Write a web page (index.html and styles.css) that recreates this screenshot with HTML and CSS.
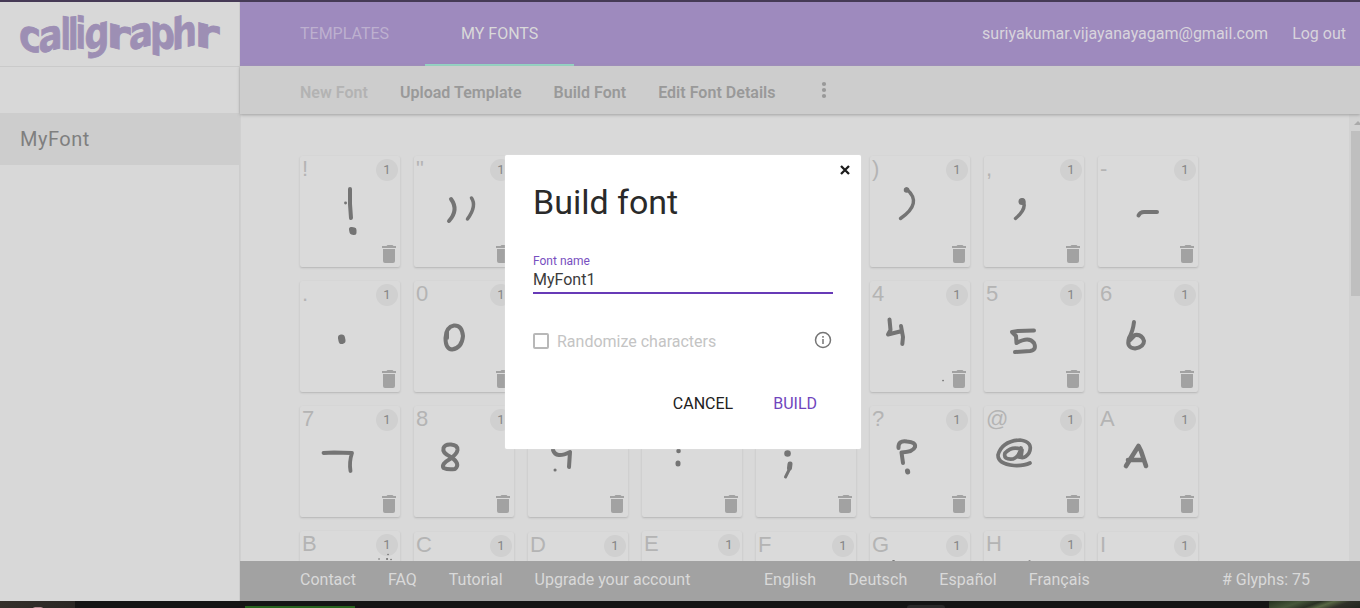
FILE: index.html
```html
<!DOCTYPE html>
<html lang="en">
<head>
<meta charset="utf-8">
<title>Calligraphr</title>
<link rel="stylesheet" href="styles.css">
</head>
<body>
<div class="app">
  <aside class="sidebar">
    <div class="brand">
      <svg class="logo" width="240" height="64" viewBox="0 2 240 64" role="img" aria-label="calligraphr">
        <g id="wordmark"></g>
      </svg>
    </div>
    <div class="spacer"></div>
    <div class="font-entry">MyFont</div>
  </aside>
  <div class="main">
    <header class="topbar">
      <a class="tab">TEMPLATES</a>
      <a class="tab tab-active">MY FONTS</a>
      <span class="account">suriyakumar.vijayanayagam@gmail.com</span>
      <span class="logout">Log out</span>
    </header>
    <nav class="toolbar">
      <span class="off">New Font</span><span>Upload Template</span><span>Build Font</span><span>Edit Font Details</span>
      <svg class="more" width="6" height="18" viewBox="0 0 6 18"><circle cx="3" cy="3" r="2.1"/><circle cx="3" cy="9" r="2.1"/><circle cx="3" cy="15" r="2.1"/></svg>
    </nav>
    <section class="content">
      <div class="grid" id="grid"></div>
      <div class="scrollbar"><i class="arrow"></i><i class="thumb"></i></div>
    </section>
    <footer class="footer">
      <span>Contact</span><span>FAQ</span><span>Tutorial</span><span class="upgrade">Upgrade your account</span>
      <span class="lang">English</span><span class="lang">Deutsch</span><span class="lang">Español</span><span class="lang">Français</span>
      <span class="count"># Glyphs: 75</span>
    </footer>
  </div>
</div>
<div class="taskbar"><i class="photo-left"></i><i class="green"></i><i class="pill"></i><i class="photo-right"></i></div>

<div class="dialog">
  <svg class="close" width="10" height="10" viewBox="0 0 10 10"><path d="M1 1 9 9M9 1 1 9"/></svg>
  <h1>Build font</h1>
  <label class="field-label">Font name</label>
  <div class="field">MyFont1</div>
  <div class="option">
    <i class="checkbox"></i><span>Randomize characters</span>
    <svg class="info" width="18" height="18" viewBox="0 0 18 18"><circle cx="9" cy="9" r="7.5"/><path d="M9 8v5M9 5v1.7"/></svg>
  </div>
  <div class="actions"><span>CANCEL</span><span class="primary">BUILD</span></div>
</div>
<script src="app.js"></script>
</body>
</html>
```
FILE: styles.css
```css
* { box-sizing: border-box; }
body {
  margin: 0; width: 1360px; height: 608px; overflow: hidden; position: relative;
  padding-top: 2px; background: #463a56;
  font-family: Roboto, "Liberation Sans", sans-serif; font-size: 16px;
}
i { display: block; }
.app { display: flex; height: 599px; }
.sidebar { width: 240px; background: #d8d8d8; border-right: 1px solid #cdcdcd; }
.brand { height: 65px; border-bottom: 1px solid #cacaca; }
.logo { display: block; }
.logo text {
  font: bold 43px "DejaVu Sans", sans-serif; fill: #9d8fb4;
  stroke: #9d8fb4; stroke-width: .9; stroke-linejoin: miter;
}
.spacer { height: 46px; }
.font-entry {
  height: 52px; width: 240px; padding-left: 20px; line-height: 52px;
  background: #cdcdcd; color: #7f7f7f; font-size: 20px; letter-spacing: .5px;
}
.main { flex: 1; display: flex; flex-direction: column; min-width: 0; }
.topbar { height: 64px; background: #9e8abe; display: flex; line-height: 64px; color: #d8d4dc; padding: 0 14px 0 24px; }
.tab { width: 161px; padding-left: 36px; color: #bdb0cf; }
.tab-active { width: 149px; color: #d9d9d9; border-bottom: 2px solid #93d6c5; }
.account { margin-left: auto; }
.logout { margin-left: 24px; }
.toolbar {
  height: 48px; background: #cdcdcd; display: flex; gap: 32px; padding-left: 60px; line-height: 53px;
  color: #999; font-weight: 600; letter-spacing: .025px; box-shadow: 0 1px 3px #a0a0a0; position: relative;
}
.toolbar .off { color: #b3b3b3; }
.more { margin: 15px 0 0 13px; fill: #999; }
.content { flex: 1; min-height: 0; overflow: hidden; background: #d9d9d9; display: flex; justify-content: space-between; border-left: 1px solid #d0d0d0; }
.grid { display: grid; grid-template-columns: repeat(8, 100px); grid-auto-rows: 111px; gap: 14px; padding: 42px 0 0 59px; align-content: start; }
.card { position: relative; background: #dadada; border-radius: 2px; box-shadow: 0 1px 2px #b5b5b5; display: flex; justify-content: space-between; padding: 3px 2px; }
.card.low { transform: translateY(1px); }
.name { font: 22px/22px "Liberation Sans", Arial, sans-serif; color: #b4b4b4; margin-top: -1px; }
.badge { width: 22px; height: 22px; border-radius: 50%; background: #d0d0d0; color: #858585; font-size: 13px; line-height: 22px; text-align: center; }
.ink { position: absolute; inset: 0; }
.ink path { fill: none; stroke: #747474; stroke-width: 4; stroke-linecap: round; stroke-linejoin: round; }
.ink .trash { fill: #a2a2a2; stroke: none; }
.scrollbar { width: 11px; background: #d2d2d2; padding: 7px 0 0 2px; overflow: hidden; }
.arrow { width: 0; height: 0; margin-left: 3px; border: 4px solid transparent; border-top: 0; border-bottom-color: #aaa; }
.thumb { height: 165px; margin-top: 6px; background: #bfbfbf; }
.footer { height: 40px; background: #a2a2a2; color: #d9d9d9; display: flex; gap: 32px; padding: 0 50px 0 60px; line-height: 37px; }
.upgrade { margin-right: 41.5px; }
.lang { letter-spacing: .08px; }
.count { margin-left: auto; }
.taskbar { height: 7px; background: #151515; display: flex; align-items: flex-end; }
.photo-left { width: 75px; height: 7px; background: radial-gradient(ellipse at 38px 7px, #b58d93 0 4px, transparent 6px), linear-gradient(90deg, #35302b, #2b2825); margin-right: 170px; }
.green { width: 110px; height: 2px; background: #28641f; margin-right: 552px; }
.pill { width: 38px; height: 3px; background: #2a2a2a; border-radius: 3px 3px 0 0; margin-right: 324px; }
.photo-right { width: 91px; height: 7px; background: linear-gradient(160deg, #25301f, #46563a 30%, #2a3024 48%, #586744 60%, #303129 75%, #22251e); }
.dialog {
  position: absolute; left: 505px; top: 155px; width: 356px; height: 294px; padding: 27px 28px 0;
  background: #fff; border-radius: 2px; box-shadow: 0 0 1px #eee; display: flex; flex-direction: column;
}
.close { position: absolute; right: 11px; top: 9.5px; stroke: #1c1c1c; stroke-width: 2.3; }
.dialog h1 { margin: 0; font-size: 34px; font-weight: 400; line-height: 40px; color: #2a2a2a; }
.field-label { color: #7850c0; font-size: 12px; line-height: 16px; margin-top: 31px; }
.field { height: 25px; line-height: 22px; color: #3c3c3c; border-bottom: 2px solid #673ab7; }
.option { display: flex; align-items: center; margin-top: 37px; height: 20px; color: #c4c4c4; }
.checkbox { width: 16px; height: 16px; border: 2px solid #b8b8b8; border-radius: 2px; margin: -1px 8px 0 0; }
.info { margin: -2px 1px 0 auto; fill: none; stroke: #757575; stroke-width: 1.5; }
.actions { display: flex; justify-content: flex-end; gap: 40px; padding-right: 16px; margin-top: 42px; line-height: 22px; color: #212121; }
.primary { color: #7045bd; }
```
FILE: app.js
```js
// Wordmark letters: [letter, x, width, baseline y, slope]
const letters = [
  ['c', 19, 22, 48, .25], ['a', 38.5, 24, 53.5, -.25], ['l', 60.5, 10.5, 48.5, .15],
  ['l', 68, 10.5, 50, -.12], ['i', 75.5, 10.5, 47.5, .15], ['g', 84.5, 25, 51, -.27],
  ['r', 106.5, 24, 46, .25], ['a', 129, 24, 50.5, -.25], ['p', 150, 25, 44.5, .25],
  ['h', 172, 25, 50.5, -.25], ['r', 194.5, 25, 45, .25]
];
document.getElementById('wordmark').innerHTML = letters.map(([c, x, w, y, k]) =>
  `<text transform="matrix(1 ${k} 0 1 ${x} ${y})" textLength="${w}" lengthAdjust="spacingAndGlyphs">${c}</text>`).join('');

const dot = (x, y, w) => `<path d="M${x} ${y}h.1" style="stroke-width:${w}"/>`;
const line = (d, w = 4) => `<path d="${d}" style="stroke-width:${w}"/>`;
const blank = ['', ''];
// Each entry: [character, handwriting strokes]
const glyphs = [
  ['!', line('M50 33 50 48 51 62') + line('M51.5 73.5 54 74 54 76.5 52 76Z', 5) + dot(45.5, 47, 2.8)],
  ['"', line('M37 43Q45 54 35 65') + line('M57.5 42Q63 50 53.5 63', 3.5)],
  blank, blank, blank,
  [')', line('M36.5 33Q53 47 30.5 62.5', 3.4) + dot(36.5, 34, 5.5)],
  [',', line('M38.5 44Q44 52 31.5 62.5', 3.4) + dot(38, 45.5, 7)],
  ['-', line('M40.5 59.5Q42 56 46 56L59 56')],
  ['.', line('M41.5 57 42 59.5', 7)],
  ['0', line('M40 44.5Q32 46 31.5 57 31.5 68 38 68.5 48 67 49 55 48 44 40 44.5M33 50 33 57')],
  blank, blank, blank,
  ['4', line('M19.5 38.5 20.5 49 18 53.5 32 50M31 45 33 56 32.3 63') + dot(73, 99.5, 1.7)],
  ['5', line('M50 49.5 34 50 28 51 32 55 32.5 62Q45 55 50 62 53 69 46 70L31 71')],
  ['6', line('M36 41Q35 50 31 57 28 67 37 67.5 46 66 46 60 44 53 37 54L31 60')],
  ['7', line('M23.5 47 34 46.5 52 47Q49 56 50.5 65', 3.8)],
  ['8', line('M37 51Q28 47 29.5 42 31 38 37 38.5 44 39 43.5 44 43 48 36 53 27 58 29.5 62 34 64 41 63 47 58 37 51')],
  ['', line('M25 44Q28 53 42 46L41 61') + dot(27, 64, 3)],
  ['', dot(36.5, 45, 4.5) + line('M36 57 36 58', 5)],
  ['', dot(31.5, 47.5, 6.5) + line('M34 58 33.5 62', 5) + line('M34 62 29.5 71', 3)],
  ['?', line('M28.5 42Q28 34 37 35.5 46 36 45 41 43 46 31.5 46.5L33 57') + line('M37.5 65 37.7 66', 5)],
  ['@', line('M46 57Q40 60 30 59.5 14 58 14 49 18 35 36 34 50 36 45 47 41 53 36 51', 3.7) + line('M36 43Q28 40 21 47 19 54 29 53 35 51 37 42L35 51M38 44 37 51', 3.7)],
  ['A', line('M28 60 40.5 40 43 45 48 60M30 54 46 54', 4.6)],
  ['B', dot(79, 28, 1.6) + dot(88, 23.5, 1.6) + dot(87, 28, 2) + dot(91, 28.5, 1.6)],
  ['C', ''], ['D', ''], ['E', ''], ['F', ''], ['G', dot(23.5, 29.5, 3)], ['H', dot(45.5, 30.5, 2.5)], ['I', '']
];
const trash = '<path class="trash" d="M82 90h4.5l1-1h5l1 1H96v2H82zM83 93h12v12q0 2-2 2h-8q-2 0-2-2z"/>';
document.getElementById('grid').innerHTML = glyphs.map(([name, ink]) =>
  `<div class="card${'CDFGI'.includes(name) && name ? ' low' : ''}"><span class="name">${name}</span><span class="badge">1</span>` +
  `<svg class="ink" width="100" height="111">${ink}${trash}</svg></div>`).join('');
```
